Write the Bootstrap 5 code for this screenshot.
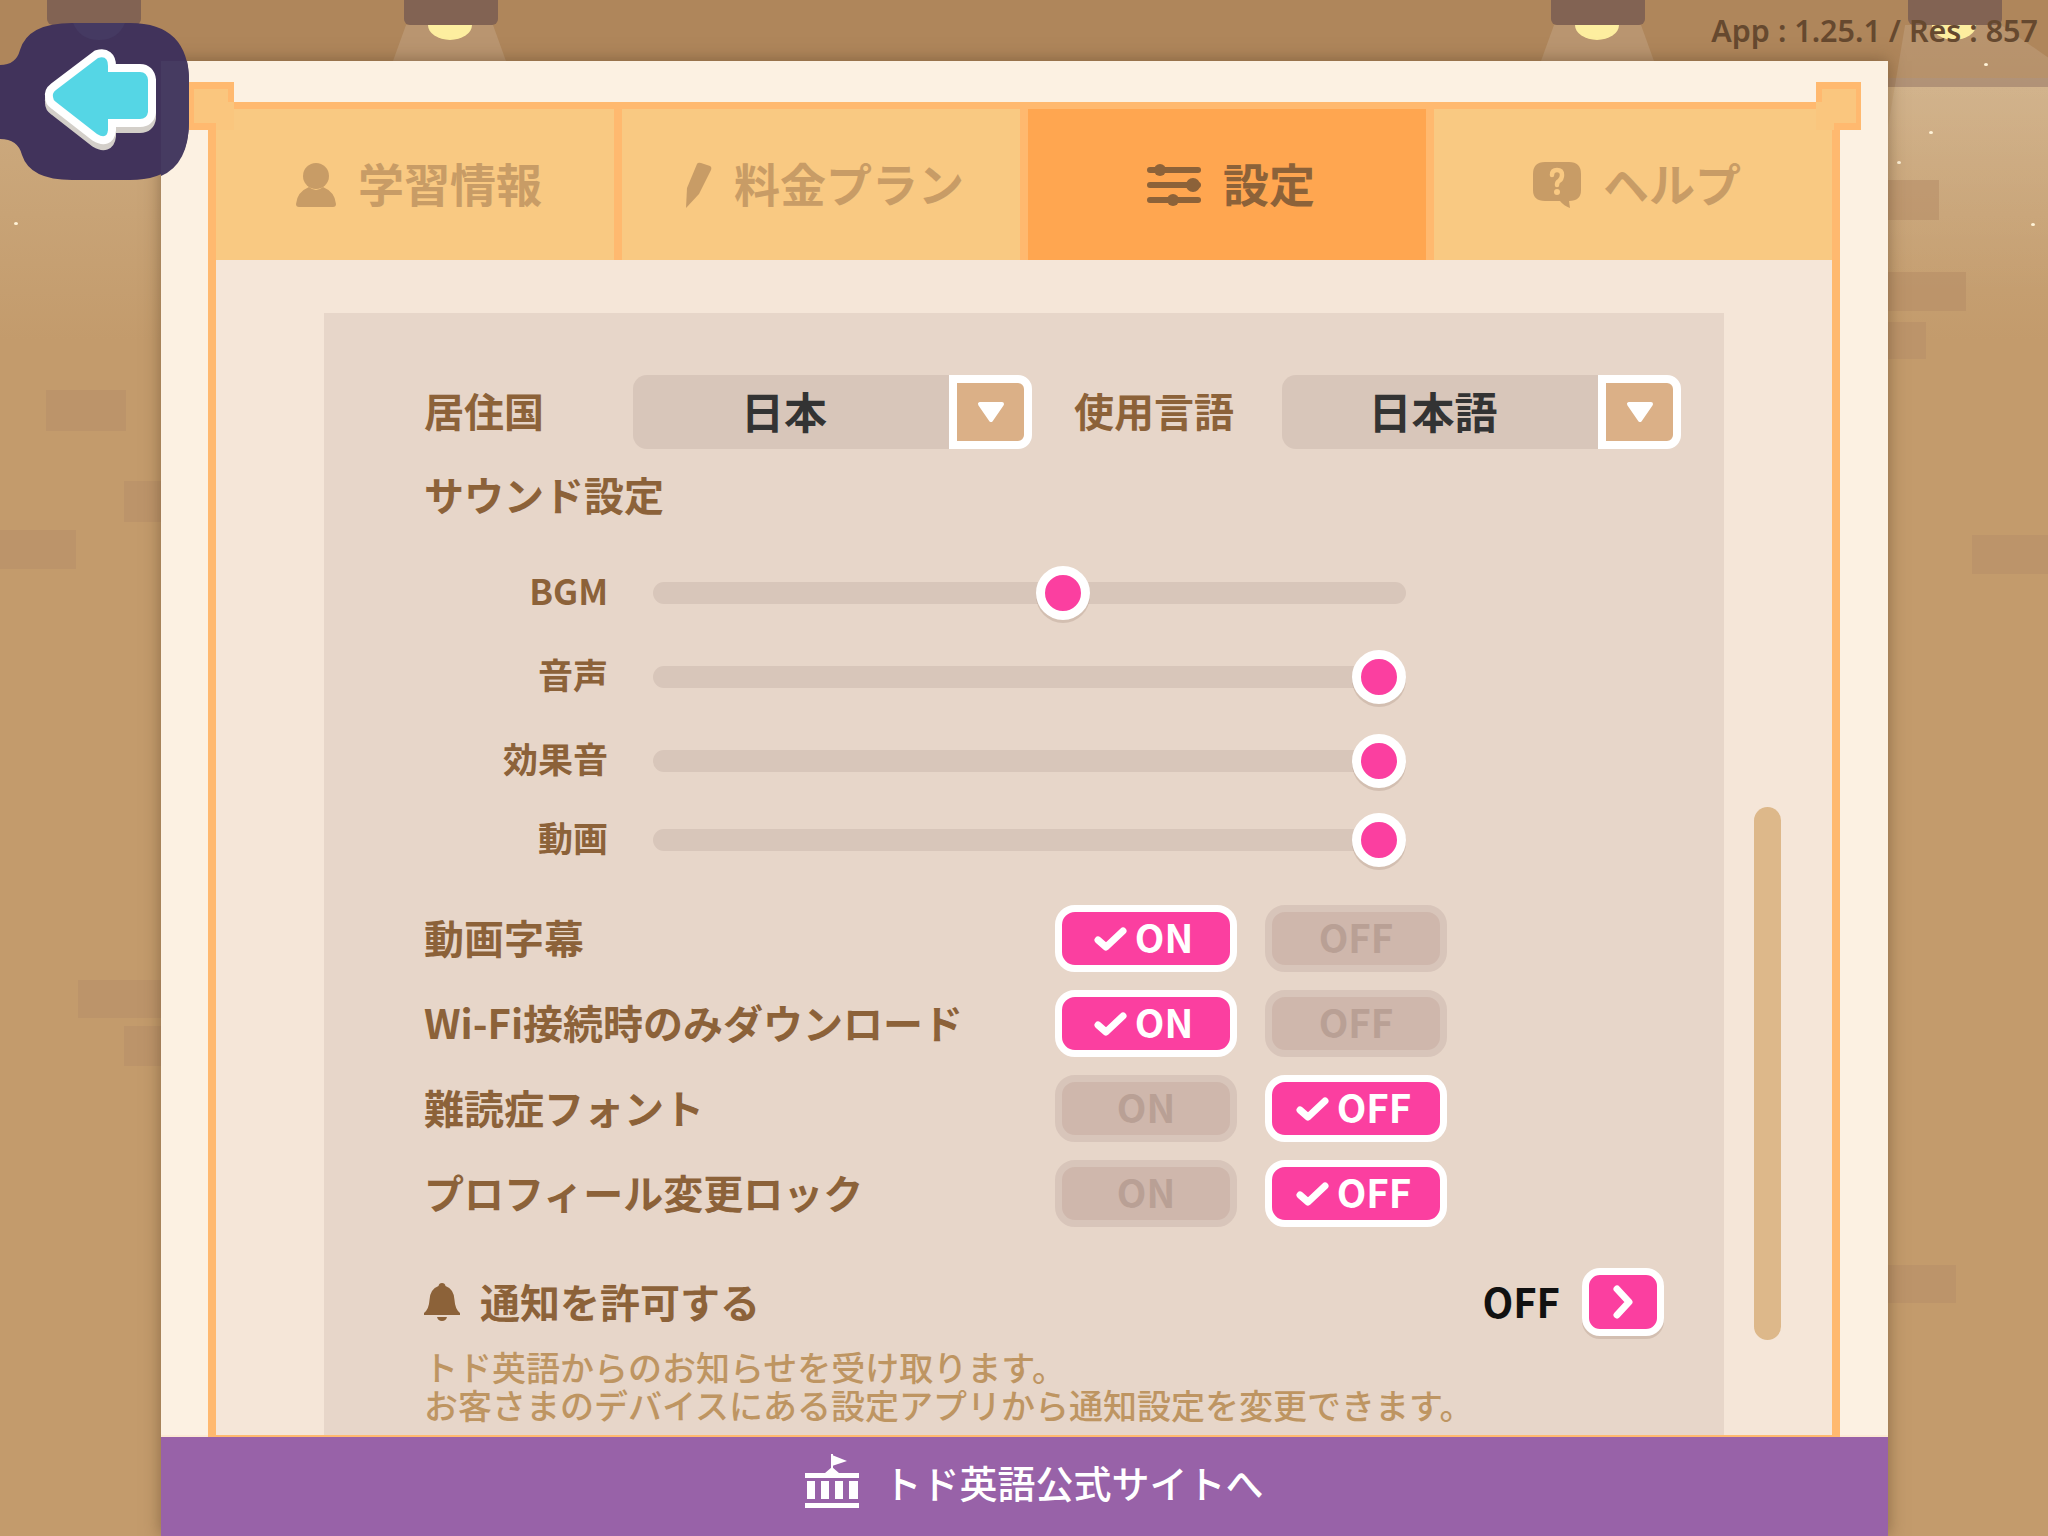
<!DOCTYPE html>
<html lang="ja">
<head>
  <meta charset="UTF-8">
  <title>設定</title>
  <link href="https://cdn.jsdelivr.net/npm/bootstrap@5.3.0/dist/css/bootstrap.min.css" rel="stylesheet">
  <style>
    body {
      margin: 0;
      font-family: "Noto Sans CJK JP", "Noto Sans", sans-serif;
      font-weight: 700;
      color: #8c6239;
      line-height: 1.4;
    }
    .stage {
      position: relative;
      width: 2048px;
      height: 1536px;
      overflow: hidden;
      padding: 61px 160px 0 161px;
      background: linear-gradient(to bottom, #af865b 0, #af865b 78px, #a98769 78px, #a98769 87px, #cdab80 87px, #c39b6c 340px);
    }
    /* 背景の飾り */
    .brick { position: absolute; background: #bc946a; }
    .spark { position: absolute; width: 4px; height: 3px; background: #fff3d8; border-radius: 50%; }
    .lamp { position: absolute; top: 0; width: 94px; height: 25px; background: #826353; border-radius: 0 0 6px 6px; }
    .lamp-bulb { position: absolute; top: 25px; width: 44px; height: 15px; background: #fdee9f; border-radius: 0 0 22px 22px / 0 0 15px 15px; }
    .lamp-cone { position: absolute; top: 25px; width: 113px; height: 36px; background: rgba(255,255,255,.13); clip-path: polygon(11.5% 0, 88.5% 0, 100% 100%, 0 100%); }
    .far-cone { position: absolute; top: 25px; left: 1860px; width: 188px; height: 270px; background: linear-gradient(to bottom, rgba(255,255,255,.12), rgba(255,255,255,0)); clip-path: polygon(24% 0, 75% 0, 100% 12%, 100% 100%, 0 100%); }
    .ver-text {
      position: absolute;
      top: 9px;
      right: 10px;
      font-family: "Noto Sans", sans-serif;
      font-size: 30.5px;
      font-weight: 600;
      color: #66492f;
    }
    .back-btn { position: absolute; left: 0; top: 23px; z-index: 5; }

    /* パネル本体 */
    .panel-main {
      position: relative;
      height: 1475px;
      padding-top: 41px;
      background: #fcf1e2;
      box-shadow: 0 0 16px rgba(80,55,30,.5);
    }
    .corner-deco {
      position: absolute;
      z-index: 2;
      top: 21px;
      width: 45px;
      height: 48px;
      background: #fac67e;
      border-top: 7px solid #ffb96f;
    }
    .corner-deco::before, .corner-deco::after { content: ""; position: absolute; background: #ffb96f; }
    .corner-deco::before { top: 0; width: 6px; height: 13px; }
    .corner-deco::after { bottom: 0; width: 27px; height: 7px; }
    .corner-left { left: 28px; border-left: 5px solid #ffb96f; }
    .corner-left::before { right: 0; }
    .corner-left::after { left: -5px; }
    .corner-right { right: 27px; border-right: 5px solid #ffb96f; }
    .corner-right::before { left: 0; }
    .corner-right::after { right: -5px; }
    .panel-frame {
      position: relative;
      height: 1335px;
      margin: 0 48px 0 47px;
      overflow: hidden;
      background: #ffb96f;
      border: solid #ffb96f;
      border-width: 7px 8px 0;
    }
    .tab-row { height: 151px; gap: 8px; }
    .tab-item {
      flex: 1 1 0;
      gap: 22px;
      padding-left: 8px;
      background: #f9c982;
      color: #c89c66;
      font-size: 46px;
    }
    .tab-item span { padding-bottom: 5px; }
    .tab-item svg { fill: #c89c66; }
    .tab-item.is-on { background: #ffa650; color: #8c6239; }
    .tab-item.is-on svg { fill: #8c6239; }

    .content-area {
      position: relative;
      height: 1175px;
      padding: 53px 108px 0;
      background: #f5e6d8;
    }
    .settings-box {
      height: 1122px;
      padding: 62px 0 0 100px;
      background: #e7d6c9;
    }
    .scroll-thumb {
      position: absolute;
      left: 1538px;
      top: 547px;
      width: 27px;
      height: 533px;
      background: #ddb88a;
      border-radius: 14px;
    }
    .field-label { font-size: 40px; padding-bottom: 5px; }
    .w-lang1 { width: 209px; }
    .w-lang2 { width: 208px; margin-left: 42px; }
    .pick-box { width: 399px; height: 74px; }
    .pick-value {
      flex: 1 1 0;
      padding-right: 14px;
      background: #d8c6ba;
      border-radius: 14px 0 0 14px;
      color: #333;
      font-size: 43px;
      text-align: center;
      line-height: 70px;
    }
    .pick-arrow {
      width: 83px;
      background: #dbb087;
      border: 8px solid #fff;
      border-radius: 0 14px 14px 0;
    }
    .sound-title { margin-top: 17px; padding-bottom: 0; line-height: 56px; }
    .slider-list { margin-top: 41px; }
    .slider-row { height: 60px; margin-bottom: 24px; }
    .slider-row.is-last { margin-top: -5px; margin-bottom: 0; }
    .slider-name { width: 184px; margin-right: 45px; padding-bottom: 7px; text-align: right; font-size: 35px; }
    .slider-track { position: relative; width: 753px; height: 22px; background: #d8c6ba; border-radius: 11px; }
    .slider-knob {
      position: absolute;
      top: 50%;
      width: 54px;
      height: 54px;
      transform: translate(-50%, -50%);
      background: #fb3fa0;
      border: 9px solid #fff;
      border-radius: 50%;
      box-shadow: 0 3px 0 rgba(120,90,70,.18);
    }
    .toggle-list { margin-top: 35px; gap: 18px; }
    .toggle-row { height: 67px; }
    .toggle-name { width: 631px; padding-bottom: 3px; }
    .toggle-btn {
      width: 182px;
      height: 67px;
      margin-right: 28px;
      gap: 8px;
      padding: 0 0 4px;
      font-size: 38.5px;
      font-weight: 700;
      line-height: 1;
      border-radius: 20px;
      background: #cfb7ac;
      border: 7px solid #d8c5ba;
      color: #b9a095;
    }
    .toggle-btn svg { margin-top: 4px; }
    .toggle-btn.is-on { padding-right: 5px; background: #fb3fa0; border-color: #fff; color: #fff; }
    .notify-row { height: 70px; margin-top: 40px; padding-right: 60px; }
    .notify-row .field-label { gap: 20px; padding-bottom: 0; }
    .notify-row .field-label span { padding-bottom: 3px; }
    .notify-state { margin-right: 22px; padding-bottom: 3px; color: #111; font-size: 40px; }
    .notify-btn {
      width: 82px;
      height: 68px;
      background: #fb3fa0;
      border: 7px solid #fff;
      border-radius: 18px;
      box-shadow: 0 3px 0 rgba(120,90,70,.18);
    }
    .notify-hint {
      margin-top: 11px;
      color: #be9562;
      font-size: 34px;
      font-weight: 500;
      line-height: 38px;
    }
    .site-link {
      height: 99px;
      gap: 24px;
      padding: 0 0 9px 20px;
      background: #9862a8;
      box-shadow: 0 -2px 0 #fce9d4;
      color: #fff;
      font-size: 38px;
      font-weight: 500;
    }
    .site-link svg { margin-top: -2px; }
  </style>
</head>
<body>
  <div class="stage">
    <!-- 背景 -->
    <div class="brick" style="left:46px;top:390px;width:80px;height:41px"></div>
    <div class="brick" style="left:124px;top:481px;width:37px;height:41px"></div>
    <div class="brick" style="left:0;top:530px;width:76px;height:39px"></div>
    <div class="brick" style="left:78px;top:980px;width:83px;height:38px"></div>
    <div class="brick" style="left:124px;top:1026px;width:37px;height:40px"></div>
    <div class="brick" style="left:1888px;top:180px;width:51px;height:40px"></div>
    <div class="brick" style="left:1888px;top:272px;width:78px;height:39px"></div>
    <div class="brick" style="left:1888px;top:322px;width:38px;height:37px"></div>
    <div class="brick" style="left:1972px;top:535px;width:76px;height:39px"></div>
    <div class="brick" style="left:1888px;top:1265px;width:68px;height:38px"></div>
    <div class="far-cone"></div>
    <div class="lamp-cone" style="left:393px"></div>
    <div class="lamp-cone" style="left:1541px"></div>
    <div class="lamp" style="left:47px"></div>
    <div class="lamp" style="left:404px"></div>
    <div class="lamp" style="left:1551px"></div>
    <div class="lamp" style="left:1908px"></div>
    <div class="lamp-bulb" style="left:428px"></div>
    <div class="lamp-bulb" style="left:1575px"></div>
    <div class="lamp-bulb" style="left:1932px"></div>
    <div class="spark" style="left:14px;top:222px"></div>
    <div class="spark" style="left:1984px;top:63px"></div>
    <div class="spark" style="left:1929px;top:131px"></div>
    <div class="spark" style="left:1897px;top:161px"></div>
    <div class="spark" style="left:2031px;top:223px"></div>
    <div class="ver-text">App : 1.25.1 / Res : 857</div>

    <!-- 戻るボタン -->
    <svg class="back-btn" width="190" height="158" viewBox="0 23 190 158">
      <path fill="#41335b" d="M0 65 Q16 65 20 50 Q28 23 72 23 H130 Q189 23 189 82 V121 Q189 180 130 180 H72 Q30 180 22 155 Q18 139 0 139 Z"/>
      <path fill="#463b61" d="M161 61 H187 Q189 70 189 82 V121 Q189 164 161 176 Z"/>
      <path fill="#453a62" d="M73 23 H125 Q118 40 99 40 Q80 40 73 23 Z"/>
      <path transform="translate(0,6)" fill="#d3cfc9" stroke="#d3cfc9" stroke-width="16" stroke-linejoin="round" d="M53 97 Q52 93 56 90 L98 58 Q108 55 108 66 V72 H140 Q147 72 148 80 V112 Q147 119 140 119 H108 V130 Q107 140 97 134 L56 102 Q53 100 53 97 Z"/>
      <path fill="#55d6e5" stroke="#fff" stroke-width="16" stroke-linejoin="round" paint-order="stroke" d="M53 97 Q52 93 56 90 L98 58 Q108 55 108 66 V72 H140 Q147 72 148 80 V112 Q147 119 140 119 H108 V130 Q107 140 97 134 L56 102 Q53 100 53 97 Z"/>
    </svg>

    <div class="panel-main">
      <div class="corner-deco corner-left"></div>
      <div class="corner-deco corner-right"></div>
      <div class="panel-frame">
        <div class="tab-row d-flex">
          <div class="tab-item d-flex align-items-center justify-content-center">
            <svg width="40" height="44" viewBox="0 0 40 44"><ellipse cx="20" cy="13" rx="13" ry="13"/><path d="M13 24 Q20 30 27 24 Q39 29 40 41 Q40 44 37 44 H3 Q0 44 0 41 Q1 29 13 24 Z"/></svg>
            <span>学習情報</span>
          </div>
          <div class="tab-item d-flex align-items-center justify-content-center">
            <svg width="26" height="46" viewBox="0 0 26 46"><path d="M11 2 Q12 0 15 1 L24 4 Q26 5 25 8 L13 32 L0 46 L1 26 Z"/></svg>
            <span>料金プラン</span>
          </div>
          <div class="tab-item is-on d-flex align-items-center justify-content-center">
            <svg width="54" height="42" viewBox="0 0 54 42">
              <rect x="0" y="3" width="54" height="6" rx="3"/><rect x="0" y="18" width="54" height="6" rx="3"/><rect x="0" y="33" width="54" height="6" rx="3"/>
              <circle cx="13" cy="6" r="6"/><circle cx="46" cy="21" r="7"/><circle cx="26" cy="36" r="6"/>
            </svg>
            <span>設定</span>
          </div>
          <div class="tab-item d-flex align-items-center justify-content-center">
            <svg width="48" height="46" viewBox="0 0 48 46">
              <path d="M12 0 H36 Q48 0 48 12 V28 Q48 39 36 39 H36 L37 46 Q31 44 27 39 H12 Q0 39 0 28 V12 Q0 0 12 0 Z"/>
              <path fill="none" stroke="#f9c982" stroke-width="4.5" stroke-linecap="round" d="M19 13 Q19 8 24 8 Q29 8 29 13 Q29 17 26 19 Q24 20 24 23"/>
              <circle cx="24" cy="30" r="3" fill="#f9c982"/>
            </svg>
            <span>ヘルプ</span>
          </div>
        </div>

        <div class="content-area">
          <div class="settings-box">
            <div class="d-flex align-items-center">
              <div class="field-label w-lang1">居住国</div>
              <div class="pick-box d-flex">
                <div class="pick-value">日本</div>
                <div class="pick-arrow d-flex align-items-center justify-content-center">
                  <svg width="30" height="22" viewBox="0 0 30 22"><path fill="#fff" stroke="#fff" stroke-width="4" stroke-linejoin="round" d="M4 3 H26 L15 19 Z"/></svg>
                </div>
              </div>
              <div class="field-label w-lang2">使用言語</div>
              <div class="pick-box d-flex">
                <div class="pick-value">日本語</div>
                <div class="pick-arrow d-flex align-items-center justify-content-center">
                  <svg width="30" height="22" viewBox="0 0 30 22"><path fill="#fff" stroke="#fff" stroke-width="4" stroke-linejoin="round" d="M4 3 H26 L15 19 Z"/></svg>
                </div>
              </div>
            </div>

            <div class="field-label sound-title">サウンド設定</div>

            <div class="slider-list">
              <div class="slider-row d-flex align-items-center">
                <div class="slider-name">BGM</div>
                <div class="slider-track"><div class="slider-knob" style="left:54.4%"></div></div>
              </div>
              <div class="slider-row d-flex align-items-center">
                <div class="slider-name">音声</div>
                <div class="slider-track"><div class="slider-knob" style="left:96.4%"></div></div>
              </div>
              <div class="slider-row d-flex align-items-center">
                <div class="slider-name">効果音</div>
                <div class="slider-track"><div class="slider-knob" style="left:96.4%"></div></div>
              </div>
              <div class="slider-row is-last d-flex align-items-center">
                <div class="slider-name">動画</div>
                <div class="slider-track"><div class="slider-knob" style="left:96.4%"></div></div>
              </div>
            </div>

            <div class="toggle-list d-flex flex-column">
              <div class="toggle-row d-flex align-items-center">
                <div class="field-label toggle-name">動画字幕</div>
                <button type="button" class="toggle-btn is-on d-flex align-items-center justify-content-center"><svg width="33" height="24" viewBox="0 0 33 24"><path fill="none" stroke="#fff" stroke-width="7" stroke-linecap="round" stroke-linejoin="round" d="M4 13 L12 20 L29 4"/></svg>ON</button>
                <button type="button" class="toggle-btn d-flex align-items-center justify-content-center">OFF</button>
              </div>
              <div class="toggle-row d-flex align-items-center">
                <div class="field-label toggle-name">Wi-Fi接続時のみダウンロード</div>
                <button type="button" class="toggle-btn is-on d-flex align-items-center justify-content-center"><svg width="33" height="24" viewBox="0 0 33 24"><path fill="none" stroke="#fff" stroke-width="7" stroke-linecap="round" stroke-linejoin="round" d="M4 13 L12 20 L29 4"/></svg>ON</button>
                <button type="button" class="toggle-btn d-flex align-items-center justify-content-center">OFF</button>
              </div>
              <div class="toggle-row d-flex align-items-center">
                <div class="field-label toggle-name">難読症フォント</div>
                <button type="button" class="toggle-btn d-flex align-items-center justify-content-center">ON</button>
                <button type="button" class="toggle-btn is-on d-flex align-items-center justify-content-center"><svg width="33" height="24" viewBox="0 0 33 24"><path fill="none" stroke="#fff" stroke-width="7" stroke-linecap="round" stroke-linejoin="round" d="M4 13 L12 20 L29 4"/></svg>OFF</button>
              </div>
              <div class="toggle-row d-flex align-items-center">
                <div class="field-label toggle-name">プロフィール変更ロック</div>
                <button type="button" class="toggle-btn d-flex align-items-center justify-content-center">ON</button>
                <button type="button" class="toggle-btn is-on d-flex align-items-center justify-content-center"><svg width="33" height="24" viewBox="0 0 33 24"><path fill="none" stroke="#fff" stroke-width="7" stroke-linecap="round" stroke-linejoin="round" d="M4 13 L12 20 L29 4"/></svg>OFF</button>
              </div>
            </div>

            <div class="notify-row d-flex align-items-center justify-content-between">
              <div class="field-label d-flex align-items-center">
                <svg width="36" height="38" viewBox="0 0 36 38"><path fill="#8c6239" d="M18 0 Q21 0 21.5 3 Q30 6 30.5 17 Q31 26 36 30 V32 H0 V30 Q5 26 5.5 17 Q6 6 14.5 3 Q15 0 18 0 Z M13 34 H23 Q22 38 18 38 Q14 38 13 34 Z"/></svg>
                <span>通知を許可する</span>
              </div>
              <div class="d-flex align-items-center">
                <div class="notify-state">OFF</div>
                <div class="notify-btn d-flex align-items-center justify-content-center">
                  <svg width="22" height="34" viewBox="0 0 22 34"><path fill="none" stroke="#fff" stroke-width="7" stroke-linecap="round" stroke-linejoin="round" d="M5 4 L17 17 L5 30"/></svg>
                </div>
              </div>
            </div>
            <div class="notify-hint">トド英語からのお知らせを受け取ります。<br>お客さまのデバイスにある設定アプリから通知設定を変更できます。</div>
          </div>
          <div class="scroll-thumb"></div>
        </div>
      </div>

      <div class="site-link d-flex align-items-center justify-content-center">
        <svg width="54" height="54" viewBox="0 0 54 54" fill="#fff">
          <rect x="26" y="0" width="2" height="16"/><path d="M27 1 L42 7 L27 12 Z"/>
          <path d="M0 19 H20 L27 13 L34 19 H54 V24 H0 Z"/>
          <rect x="2" y="27" width="8" height="18"/><rect x="16" y="27" width="8" height="18"/><rect x="30" y="27" width="8" height="18"/><rect x="44" y="27" width="9" height="18"/>
          <rect x="0" y="49" width="54" height="5"/>
        </svg>
        <span>トド英語公式サイトへ</span>
      </div>
    </div>
  </div>
  <script src="https://cdn.jsdelivr.net/npm/bootstrap@5.3.0/dist/js/bootstrap.bundle.min.js"></script>
</body>
</html>
